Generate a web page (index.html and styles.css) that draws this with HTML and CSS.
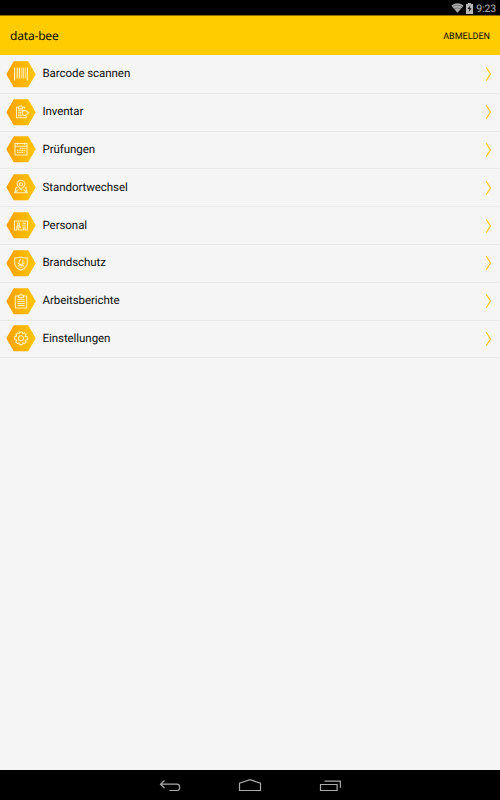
FILE: index.html
```
<!DOCTYPE html>
<html lang="de">
<head>
<meta charset="utf-8">
<title>data-bee</title>
<link rel="stylesheet" href="styles.css">
</head>
<body>
<svg width="0" height="0" class="defs" aria-hidden="true">
  <defs>
    <linearGradient id="gold" x1="0" y1="0" x2="1" y2="0"><stop offset="0" stop-color="#faa000"/><stop offset="1" stop-color="#fec600"/></linearGradient>
    <symbol id="hex" viewBox="0 0 30 27"><path d="M.3 13.3 7.8.3h14.4l7.500 13-7.500 13H7.800z" fill="url(#gold)"/></symbol>
    <symbol id="arrow" viewBox="0 0 7 16"><path d="M1.200 1.300 5.500 8 1.200 14.700" fill="none" stroke="#fc0" stroke-width="1.200"/></symbol>
  </defs>
</svg>
<div class="status">
  <svg width="13" height="10" viewBox="0 0 13 10"><path d="M.3 2.700Q6.500-2 12.700 2.700L6.500 9.800z" fill="#aaa"/><path d="M1.200 4.100Q6.500.2 11.800 4.100M3 6Q6.500 3.600 10 6" fill="none" stroke="#444" stroke-width=".5"/></svg>
  <svg class="battery" width="7" height="11" viewBox="0 0 7 11"><path d="M2 0h3v1h2v10H0V1h2z" fill="#b8b8b8"/><path d="M4.200 2.500 1.500 6h1.800l-.5 3L5.600 5.300H3.800z" fill="#111"/></svg>
  <span>9:23</span>
</div>
<header class="bar"><h1>data-bee</h1><span class="logout">ABMELDEN</span></header>
<main class="list">
  <div class="row"><svg class="icon" viewBox="0 0 30 27"><use href="#hex"/><g class="bars"><path d="M8.600 6.500v13M11.200 6.500v11M13.400 6.500v11M17.200 6.500v11M21.400 6.500v13" stroke-width="1.200"/><path d="M15.300 6.500v11M19.300 6.500v11" stroke-width=".8"/></g></svg><span>Barcode scannen</span><svg class="arrow"><use href="#arrow"/></svg></div>
  <div class="row"><svg class="icon" viewBox="0 0 30 27"><use href="#hex"/><g class="line"><path d="M18.500 9.500V8.300h-2.300L15.700 7h-2.500l-.5 1.300h-2.200v10.400h9.800v-1.500M12.500 8.300v1.500h4V8.300M12 11.300h5M12 13.300h3M12 15h3M12 16.800h4M16 13.400l1.800-2 2.200.4 2.500 2-3.200 2.800-2.500-.6z"/></g></svg><span>Inventar</span><svg class="arrow"><use href="#arrow"/></svg></div>
  <div class="row"><svg class="icon" viewBox="0 0 30 27"><use href="#hex"/><g class="line"><path d="M9 7.500h12v11.500H9zM9 10.200h12M11.500 6.500v2.200M18.500 6.500v2.200"/><path d="M14 12.300h5.500M11 14.300h8.500M11 16.300h7.500" stroke-width="1.300" stroke-dasharray="1.500 .7"/></g></svg><span>Prüfungen</span><svg class="arrow"><use href="#arrow"/></svg></div>
  <div class="row"><svg class="icon" viewBox="0 0 30 27"><use href="#hex"/><g class="line"><path d="M15 15.600c-1.500-2.100-4-3.500-4-5.300a4 4 0 0 1 8 0c0 1.800-2.500 3.200-4 5.300z"/><circle cx="15" cy="10.300" r="1.600"/><path d="M11.300 13.500h-1.200L8.700 18.700h12.600l-1.400-5.200h-1.200M9.500 18.200l3-2.700M20.500 18.200l-3-2.700"/></g></svg><span>Standortwechsel</span><svg class="arrow"><use href="#arrow"/></svg></div>
  <div class="row"><svg class="icon" viewBox="0 0 30 27"><use href="#hex"/><g class="line"><path d="M8.500 9h13v9h-2.200v-1.200h-2V18h-4.600v-1.200h-2V18H8.500zM10.500 15.300q.2-1.700 2-1.700t2 1.700zM16.300 11.300h3.700M16.300 13.300h3.700M16.300 15.200h3.700"/><circle cx="12.500" cy="12" r="1.300"/></g></svg><span>Personal</span><svg class="arrow"><use href="#arrow"/></svg></div>
  <div class="row"><svg class="icon" viewBox="0 0 30 27"><use href="#hex"/><g class="line"><path d="M15 7q-3 1.200-6.300 1v5c0 3.500 3 5.800 6.300 7.300 3.300-1.500 6.300-3.800 6.300-7.300V8Q18 8.200 15 7z"/><path d="M14.300 9c1 1.500-2.500 2-1 3.700M16.500 9.700c1.600 1.300-.7 2 .6 3.200M11.500 13l6.800 3.300M18.500 13l-6.800 3.300M13.500 17.300h3"/></g></svg><span>Brandschutz</span><svg class="arrow"><use href="#arrow"/></svg></div>
  <div class="row"><svg class="icon" viewBox="0 0 30 27"><use href="#hex"/><g class="line"><path d="M12.500 8H9.300v12h11.400V8h-3.200M12.500 9.500V7.300h1.500L15 6l1 1.300h1.500v2.200zM11.300 11.500h7.400M11.300 13.500h7.400M11.300 15.500h7.400M11.300 17.500h7.400"/></g></svg><span>Arbeitsberichte</span><svg class="arrow"><use href="#arrow"/></svg></div>
  <div class="row"><svg class="icon" viewBox="0 0 30 27"><use href="#hex"/><g class="line"><path d="M13.700 7h2.600l.5 1.800 1.700-.9 1.700 1.700-.9 1.700 2 .5v2.800l-2 .5.900 1.800-1.700 1.700-1.700-.9-.5 1.900h-2.600l-.5-1.900-1.700.9-1.700-1.700.9-1.800-2-.5v-2.800l2-.5-.9-1.700 1.700-1.700 1.700.9z"/><circle cx="15" cy="13.300" r="2.500"/></g></svg><span>Einstellungen</span><svg class="arrow"><use href="#arrow"/></svg></div>
</main>
<nav class="nav">
  <svg width="200" height="30" viewBox="0 0 200 30"><g fill="none" stroke="#aaa" stroke-width="1.200"><path d="M14.500 10.500 10.500 14.200l4 3.800M10.500 14.200h16.300a2.800 2.800 0 0 1 2.800 2.800v.7a2.800 2.800 0 0 1-2.800 2.800H19.500"/><path d="M89.500 20.500V13.300L100 9.700l10.500 3.600v7.200z"/><path d="M170.500 14.500h16.600v6h-16.600zM174.500 11.200h15.900v6.500"/></g></svg>
</nav>
</body>
</html>
```
FILE: styles.css
```
* { box-sizing: border-box; }
body {
  margin: 0;
  width: 500px;
  height: 800px;
  display: flex;
  flex-direction: column;
  overflow: hidden;
  background: #f5f5f5;
  color: #0c0c0c;
  font-family: Roboto, sans-serif;
  text-rendering: geometricPrecision;
}
.defs { position: absolute; }
.status {
  height: 15px;
  flex: none;
  display: flex;
  justify-content: flex-end;
  align-items: center;
  padding: 1px 4px 0 0;
  background: #000;
  color: #bbb;
  font-size: 10.500px;
}
.status span { letter-spacing: -.1px; }
.battery { margin: 0 3px 0 2px; }
.bar {
  height: 40px;
  flex: none;
  display: flex;
  justify-content: space-between;
  align-items: center;
  padding: 0 10px;
  background: #fc0;
  border-top: 1px solid #8c7000;
}
.bar h1 {
  margin: 0;
  font: 400 12px "Noto Sans", sans-serif;
  letter-spacing: -.18px;
}
.logout { padding-top: 2px; font-size: 9px; }
.list { flex: 1; padding-top: 1px; }
.row {
  height: 37.800px;
  display: flex;
  align-items: center;
  padding: 0 8px 0 6px;
  border-bottom: 1px solid #eaeaea;
  font-size: 11.500px;
}
.row span {
  flex: 1;
  margin-left: 6.500px;
  padding-bottom: 2px;
  letter-spacing: -.06px;
}
.icon { width: 30px; height: 27px; }
.arrow { width: 7px; height: 16px; }
.line, .bars { fill: none; stroke: #fff0c4; }
.line { stroke-width: 1.050; }
.nav {
  height: 30px;
  flex: none;
  display: flex;
  justify-content: center;
  background: #000;
}
```
